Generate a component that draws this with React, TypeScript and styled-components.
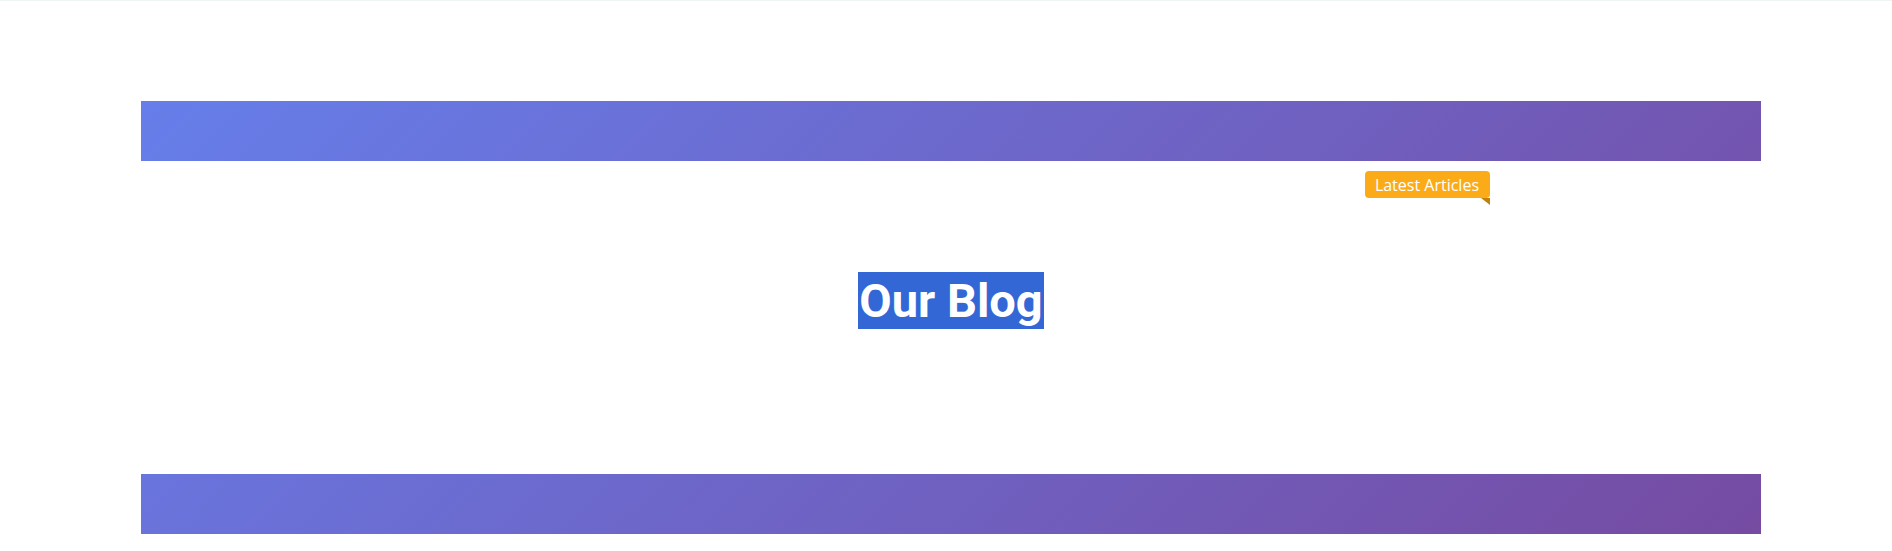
import React from "react";
import styled, { createGlobalStyle } from "styled-components";

const GlobalStyle = createGlobalStyle`
  html, body {
    margin: 0;
    padding: 0;
    background: #ffffff;
  }
  body {
    font-family: "Open Sans", "Noto Sans", sans-serif;
  }
`;

const Page = styled.div`
  border-top: 1px solid #edf6f3;
  padding: 100px 131px 17px 141px;
`;

const Hero = styled.section`
  background: linear-gradient(135deg, #667eea 0%, #764ba2 100%);
  padding: 60px 0;
`;

const Panel = styled.div`
  position: relative;
  background: #ffffff;
  height: 313px;
  display: flex;
  flex-direction: column;
  align-items: center;
  padding-top: 111px;
  box-sizing: border-box;
`;

const Title = styled.h1`
  margin: 0;
  font-family: Roboto, "Liberation Sans", sans-serif;
  font-weight: 700;
  font-size: 47px;
  line-height: 57px;
  color: #ffffff;
  background: #3367d6;
  padding: 0 1px;
`;

const Badge = styled.span`
  position: absolute;
  top: 10px;
  right: 271px;
  background: #fbab18;
  color: #ffffff;
  font-family: "Open Sans", "Noto Sans", sans-serif;
  font-size: 16px;
  line-height: 28px;
  height: 27px;
  padding: 0 11px 0 10px;
  border-radius: 4px;
  white-space: nowrap;

  &::after {
    content: "";
    position: absolute;
    right: 0;
    bottom: -7px;
    width: 0;
    height: 0;
    border-top: 7px solid #c0820d;
    border-left: 9px solid transparent;
  }
`;

export default function App() {
  return (
    <>
      <GlobalStyle />
      <Page>
        <Hero>
          <Panel>
            <Badge>Latest Articles</Badge>
            <Title>Our Blog</Title>
          </Panel>
        </Hero>
      </Page>
    </>
  );
}
